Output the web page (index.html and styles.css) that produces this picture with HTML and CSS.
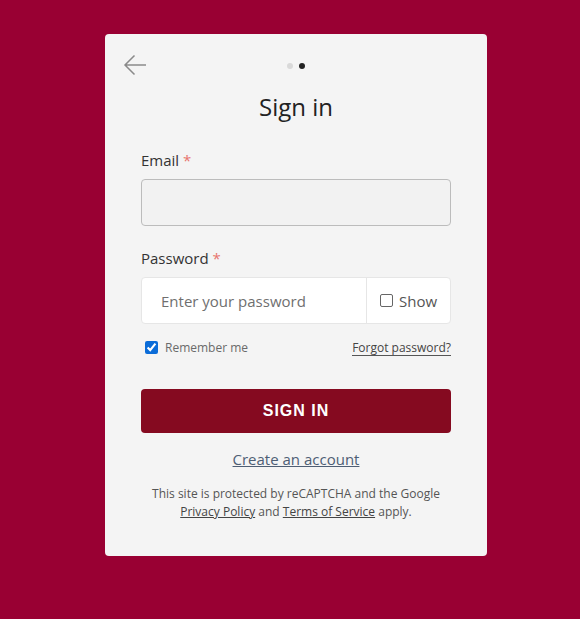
FILE: index.html
```html
<!DOCTYPE html>
<html lang="en">
<head>
    <title>Sign in</title>
    <link rel="stylesheet" href="styles.css">
</head>
<body>
    <div class="login-card">
        <div class="top-bar">
            <a href="#" class="back-link">
                <svg width="24" height="22" viewBox="0 0 24 22">
                    <path d="M23 11H2M11.5 1.5L2 11l9.5 9.5" fill="none" stroke="#8a8a8a" stroke-width="1.5"/>
                </svg>
            </a>
            <div class="steps">
                <span class="dot"></span>
                <span class="dot active"></span>
            </div>
        </div>

        <h1>Sign in</h1>

        <form>
            <label class="field-label">Email <span class="req">*</span></label>
            <input type="text" class="email-input">

            <label class="field-label">Password <span class="req">*</span></label>
            <div class="password-group">
                <input type="password" class="password-input" placeholder="Enter your password">
                <label class="show-toggle"><span class="box"></span>Show</label>
            </div>

            <div class="options-row">
                <label class="remember"><input type="checkbox" checked> Remember me</label>
                <a href="#" class="forgot">Forgot password?</a>
            </div>

            <button type="button" class="signin-button">SIGN IN</button>
        </form>

        <a href="#" class="create-account">Create an account</a>

        <p class="recaptcha">This site is protected by reCAPTCHA and the Google
            <a href="#">Privacy Policy</a> and <a href="#">Terms of Service</a> apply.</p>
    </div>
</body>
</html>
```

FILE: styles.css
```css
body {
    font-family: "Open Sans", sans-serif;
    margin: 0;
    padding: 0;
    background-color: #990033;
    color: #222;
}

.login-card {
    width: 310px;
    margin: 34px 0 0 105px;
    background-color: #f4f4f4;
    border-radius: 4px;
    padding: 18px 36px 35px;
    position: relative;
}

.top-bar {
    height: 28px;
    display: flex;
    align-items: center;
    justify-content: center;
}

.back-link {
    position: absolute;
    left: 18px;
    top: 20px;
    line-height: 0;
}

.steps {
    display: flex;
    gap: 6px;
}

.dot {
    width: 6px;
    height: 6px;
    border-radius: 50%;
    background: #d9d9d9;
}

.dot.active {
    background: #222;
}

h1 {
    font-size: 24px;
    font-weight: 400;
    text-align: center;
    margin: 9px 0 0;
    line-height: 36px;
    color: #222;
}

form {
    margin-top: 24px;
}

.field-label {
    display: block;
    font-size: 15px;
    line-height: 22px;
    color: #333;
    margin-bottom: 8px;
}

.req {
    color: #e8746e;
}

.email-input {
    display: block;
    box-sizing: border-box;
    width: 100%;
    height: 47px;
    border: 1px solid #bcbcbc;
    border-radius: 4px;
    background: #f2f2f2;
    margin: 0 0 21px;
}

.password-group {
    display: flex;
    height: 47px;
    box-sizing: border-box;
    border: 1px solid #e6e6e6;
    border-radius: 4px;
    background: #fff;
}

.password-input {
    flex: 1;
    border: none;
    background: transparent;
    padding: 0 0 0 19px;
    font-family: "Open Sans", sans-serif;
    font-size: 15px;
    outline: none;
    min-width: 0;
}

.password-input::placeholder {
    color: #6f6f6f;
}

.show-toggle {
    width: 84px;
    border-left: 1px solid #e6e6e6;
    display: flex;
    align-items: center;
    padding-left: 13px;
    box-sizing: border-box;
    font-size: 15px;
    color: #555;
    gap: 6px;
}

.show-toggle .box {
    width: 11px;
    height: 11px;
    border: 1px solid #666;
    border-radius: 2px;
}

.options-row {
    display: flex;
    justify-content: space-between;
    align-items: center;
    margin-top: 15px;
}

.remember {
    display: flex;
    align-items: center;
    font-size: 12px;
    color: #6a6a6a;
    gap: 7px;
    margin-left: 4px;
}

.remember input {
    margin: 0;
    width: 13px;
    height: 13px;
    accent-color: #0b6cd8;
}

.forgot {
    font-size: 12px;
    color: #444;
    text-decoration: none;
    border-bottom: 1px solid #555;
    line-height: 15px;
}

.signin-button {
    display: block;
    width: 100%;
    height: 44px;
    margin-top: 33px;
    background-color: #850a20;
    color: #fff;
    border: none;
    border-radius: 4px;
    font-family: "Liberation Sans", Arial, sans-serif;
    font-weight: bold;
    font-size: 16px;
    letter-spacing: 1px;
    cursor: pointer;
}

.create-account {
    display: block;
    width: max-content;
    margin: 16px auto 0;
    font-size: 15px;
    color: #4e5e74;
    line-height: 20px;
}

.recaptcha {
    font-size: 12px;
    line-height: 18px;
    color: #555;
    text-align: center;
    margin: 16px 0 0;
}

.recaptcha a {
    color: #444;
}
```
